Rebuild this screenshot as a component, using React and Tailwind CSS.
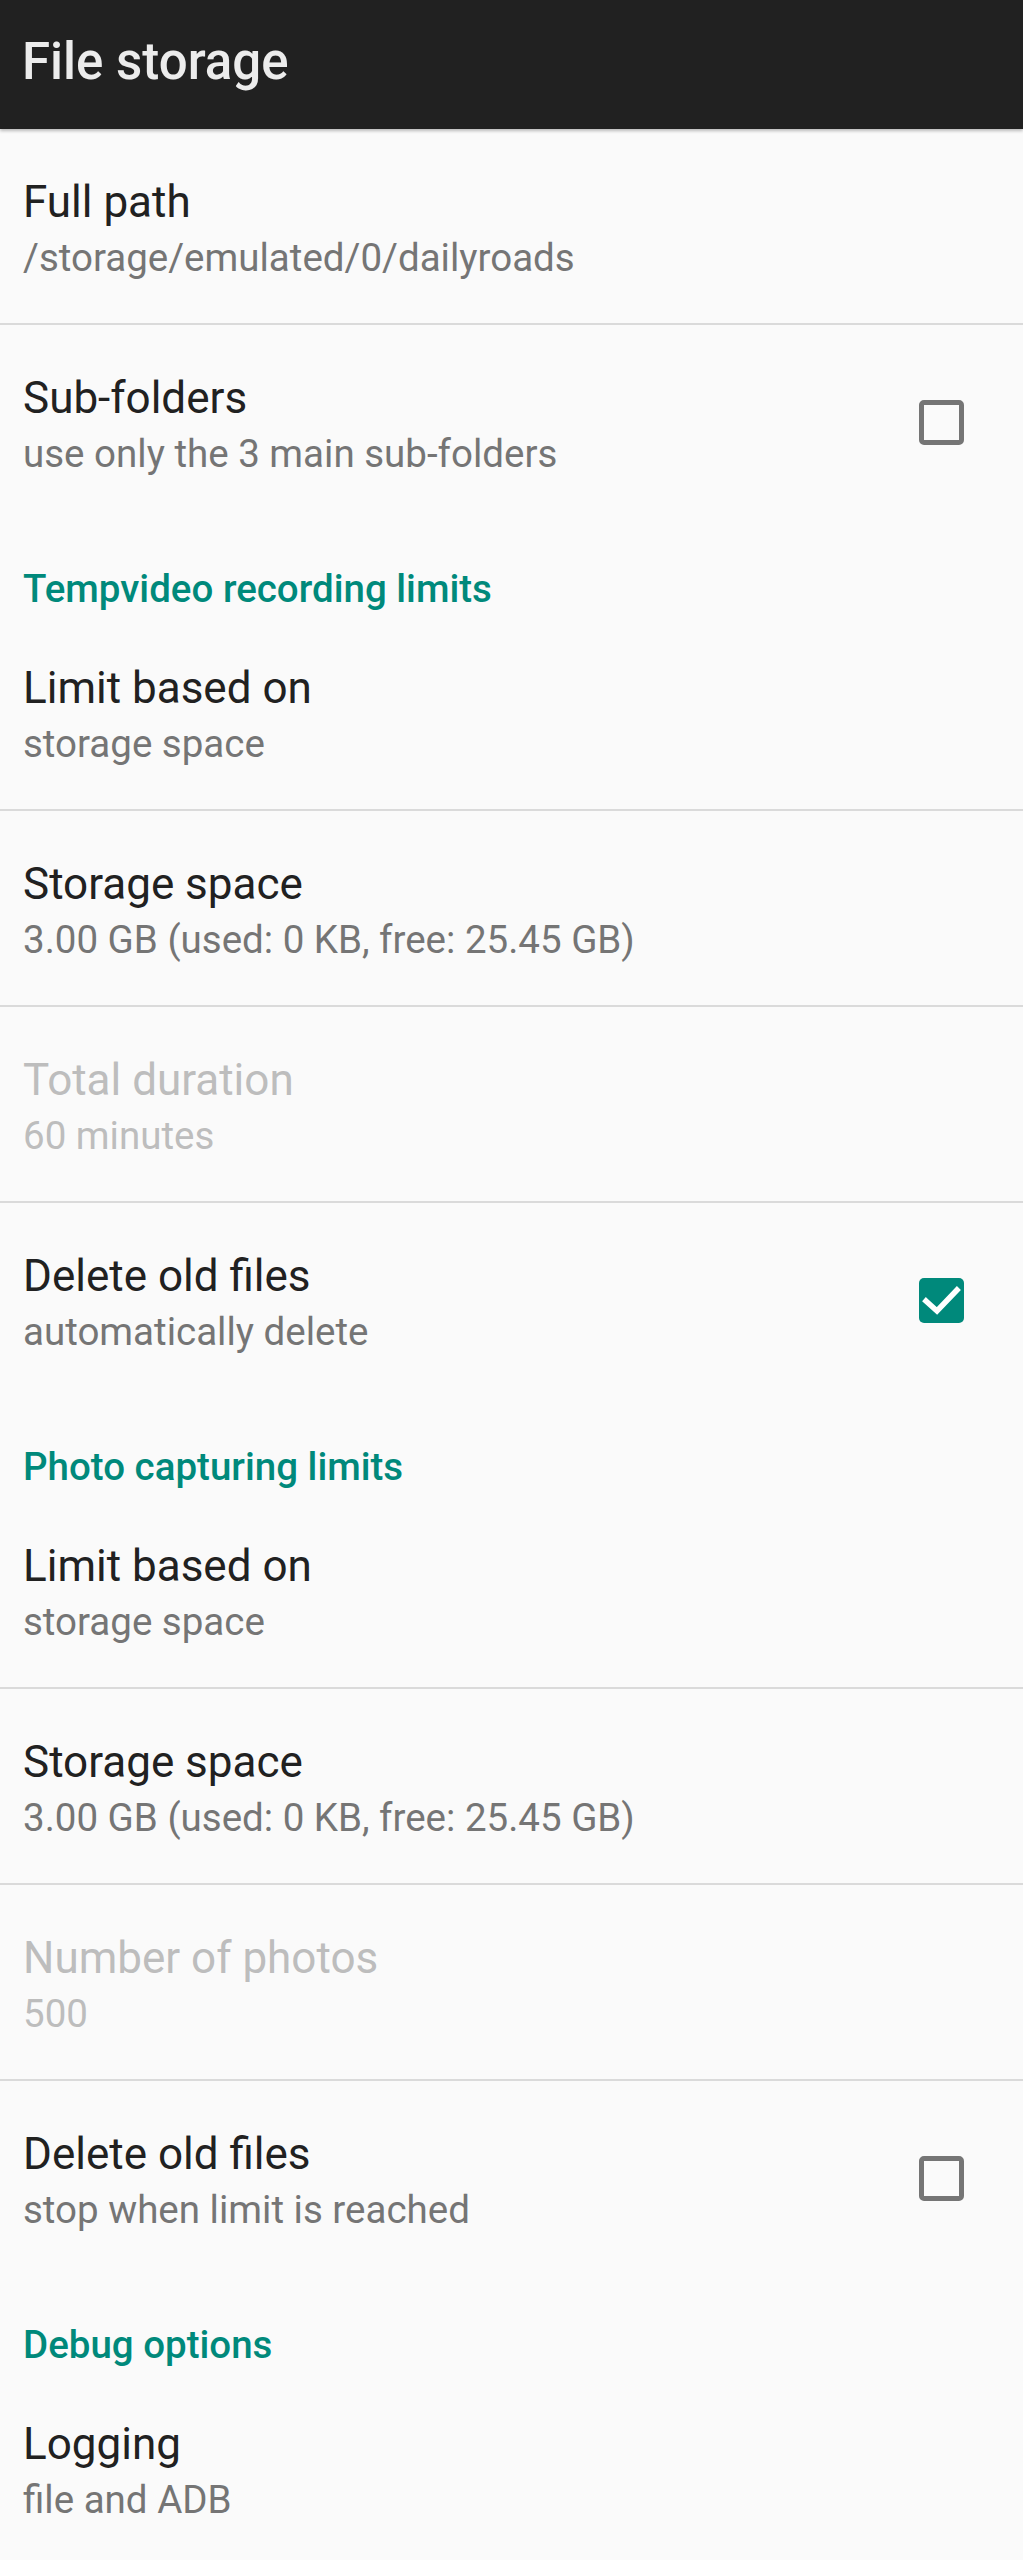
import React from "react";

function Checkbox({ checked }) {
  if (checked) {
    return (
      <div className="w-[45px] h-[45px] rounded-[5px] bg-[#00897b] flex items-center justify-center shrink-0 self-center">
        <svg width="45" height="45" viewBox="0 0 45 45">
          <path d="M7 23 L18 33 L38 12" fill="none" stroke="#ffffff" strokeWidth="5.5" strokeLinecap="square" strokeLinejoin="miter" />
        </svg>
      </div>
    );
  }
  return <div className="w-[45px] h-[45px] rounded-[5px] border-[5px] border-[#757575] shrink-0 self-center" />;
}

function Row({ title, subtitle, disabled, checkbox, divider = true }) {
  return (
    <>
      <div className="h-[194px] flex pl-[23px] pr-[59px]">
        <div className="flex-1 flex flex-col pt-[47px]">
          <div className={`text-[44px] leading-[52px] ${disabled ? "text-[#bdbdbd]" : "text-[#212121]"}`}>{title}</div>
          <div className={`text-[38.5px] leading-[60px] ${disabled ? "text-[#bdbdbd]" : "text-[#757575]"}`}>{subtitle}</div>
        </div>
        {checkbox !== undefined && <Checkbox checked={checkbox} />}
      </div>
      {divider && <div className="h-[2px] bg-[#dadada]" />}
    </>
  );
}

function Category({ title }) {
  return (
    <div className="h-[96px] pt-[50px] pl-[23px]">
      <div className="text-[38.5px] leading-[40px] font-medium text-[#00897b]">{title}</div>
    </div>
  );
}

export default function App() {
  return (
    <div className="w-[1023px] h-[2560px] overflow-hidden bg-[#fafafa]" style={{ fontFamily: "Roboto, 'Noto Sans', sans-serif" }}>
      <div className="h-[129px] bg-[#212121] flex items-center pl-[22px] pb-[6px] shadow-[0_2px_3px_rgba(0,0,0,0.25)] relative z-10">
        <div className="text-[51px] font-medium text-[#ececec] leading-none">File storage</div>
      </div>
      <Row title="Full path" subtitle="/storage/emulated/0/dailyroads" />
      <Row title="Sub-folders" subtitle="use only the 3 main sub-folders" checkbox={false} divider={false} />
      <Category title="Tempvideo recording limits" />
      <Row title="Limit based on" subtitle="storage space" />
      <Row title="Storage space" subtitle="3.00 GB (used: 0 KB, free: 25.45 GB)" />
      <Row title="Total duration" subtitle="60 minutes" disabled />
      <Row title="Delete old files" subtitle="automatically delete" checkbox={true} divider={false} />
      <Category title="Photo capturing limits" />
      <Row title="Limit based on" subtitle="storage space" />
      <Row title="Storage space" subtitle="3.00 GB (used: 0 KB, free: 25.45 GB)" />
      <Row title="Number of photos" subtitle="500" disabled />
      <Row title="Delete old files" subtitle="stop when limit is reached" checkbox={false} divider={false} />
      <Category title="Debug options" />
      <Row title="Logging" subtitle="file and ADB" divider={false} />
    </div>
  );
}
